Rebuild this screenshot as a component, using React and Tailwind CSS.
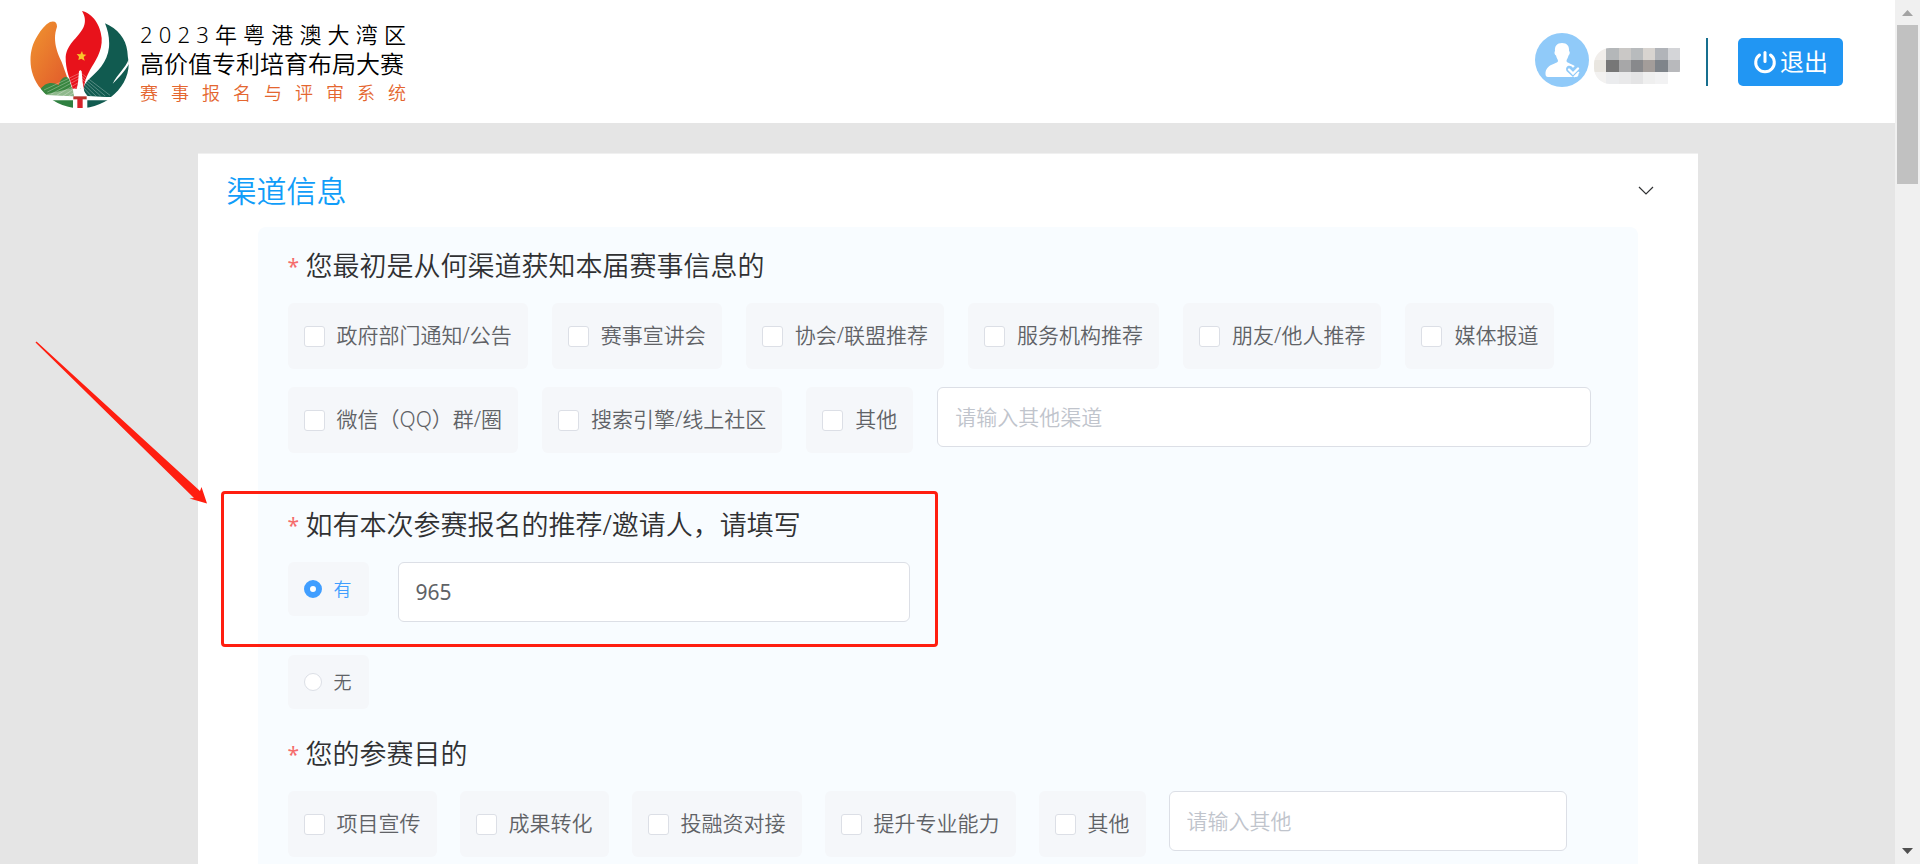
import React from "react";

const CHANNELS = [
  "政府部门通知/公告",
  "赛事宣讲会",
  "协会/联盟推荐",
  "服务机构推荐",
  "朋友/他人推荐",
  "媒体报道",
  "微信（QQ）群/圈",
  "搜索引擎/线上社区",
  "其他",
];

const PURPOSES = ["项目宣传", "成果转化", "投融资对接", "提升专业能力", "其他"];

const MASK = [
  ["#f1eeeb", "#b4b7b9", "#cac8c6", "#b8bbbd", "#d8d4d0", "#b1b4b9", "#d4d5d8"],
  ["#e9e6e0", "#777777", "#a7a7a8", "#88898c", "#a39d9a", "#7f848a", "#b8b9bc"],
  ["#f3f2f1", "#ebecee", "#e9e9ea", "#e4e4e5", "#efefef", "#f2f2f3", "#ffffff"],
];

function Emblem() {
  return (
    <svg viewBox="90 28 297 297" className="h-[99px] w-[99px] shrink-0" aria-hidden="true">
      <defs>
        <linearGradient id="flameOrange" x1="0" y1="0" x2="1" y2="1">
          <stop offset="0" stopColor="#f0952f" />
          <stop offset="1" stopColor="#e0552b" />
        </linearGradient>
        <clipPath id="emblemBase">
          <path d="M90 225 L385 225 L350 278 Q300 322 240 323 Q165 320 122 264 Z" />
        </clipPath>
      </defs>
      <path
        d="M150 64 Q171 58 171 78 C160 110 164 140 184 182 C192 200 200 232 216 262 L190 266 L124 266 C84 222 82 152 112 106 C124 86 136 72 150 64 Z"
        fill="url(#flameOrange)"
      />
      <g clipPath="url(#emblemBase)">
        <path d="M118 270 C134 244 158 242 176 254 C182 230 200 222 208 236 L222 290 L150 288 Z" fill="#39863f" />
        <path d="M132 282 L218 262 L222 288 L140 288 Z" fill="#8fb98c" />
        <path d="M150 299 H219 V326 H150 Z" fill="#2f8040" />
        <path d="M262 299 H330 L300 325 H262 Z" fill="#115b50" />
      </g>
      <path
        d="M315 68 C352 84 378 114 382 152 Q383 168 386 184 C388 226 366 264 332 290 L262 286 L248 266 Q252 252 262 240 C292 214 322 186 327 140 C329 112 324 90 315 68 Z"
        fill="#115b50"
      />
      <path d="M386 176 C378 200 352 222 338 249 C356 232 372 214 387 190 Z" fill="#fff" />
      <path
        d="M246 31 C278 38 302 74 305 112 C308 152 284 184 270 208 C258 230 252 248 252 264 L218 264 C210 236 196 206 197 168 C202 126 240 108 252 76 C258 60 254 44 246 31 Z"
        fill="#e8121b"
      />
      <polygon points="246,151 249,161 259,162 251,169 254,180 244,174 235,178 237,168 230,160 241,161" fill="#f9c52b" />
      <g stroke="#fff" strokeWidth="1.3" opacity="0.7" fill="none">
        <path d="M238 218 L132 268" />
        <path d="M238 226 L142 274" />
        <path d="M238 234 L154 280" />
        <path d="M238 244 L170 284" />
        <path d="M238 254 L186 288" />
        <path d="M238 264 L204 288" />
        <path d="M244 218 L330 284" />
        <path d="M244 226 L316 286" />
        <path d="M244 234 L302 286" />
        <path d="M244 244 L290 288" />
        <path d="M244 254 L276 288" />
        <path d="M244 264 L264 288" />
      </g>
      <path d="M241 208 L237 212 L234 246 L223 300 L232 300 L241 262 L249 300 L258 300 L248 246 L245 212 Z" fill="#fff" />
      <path d="M126 282 Q240 289 342 289 L332 298 Q230 298 142 297 L126 291 Z" fill="#fff" />
      <path d="M220 287 H260 V296 H220 Z" fill="#b8342c" />
      <path d="M232 294 H248 V322 H232 Z" fill="#d8222a" />
    </svg>
  );
}

function Logo() {
  return (
    <div className="flex items-center gap-[11px] pb-1">
      <Emblem />
      <div className="w-[266px] pt-[6px] text-black">
        <div className="flex justify-between text-[22px] leading-[30px]">
          {[..."2023年粤港澳大湾区"].map((ch, i) => (
            <span key={i}>{ch}</span>
          ))}
        </div>
        <div className="text-[24px] leading-[30px] whitespace-nowrap">高价值专利培育布局大赛</div>
        <div className="text-[18px] leading-[28px] text-[#e4662f] [text-align-last:justify]">赛事报名与评审系统</div>
      </div>
    </div>
  );
}

function Avatar() {
  return (
    <svg viewBox="0 0 54 54" className="h-[54px] w-[54px]" aria-hidden="true">
      <circle cx="27" cy="27" r="27" fill="#90caf9" />
      <path
        d="M27 10 C32 10 34.500 13 34 18 C35.500 19 34.500 22 33.500 22.500 C33 25 31.500 26.500 31.500 28 C31.500 31 43.500 30.500 43.500 41 Q43.500 44 41 44 H13 Q10.500 44 10.500 41 C10.500 30.500 23 31 23 28 C23 26.500 21.500 25 21 22.500 C19.500 22 19 19 20 18 C19.500 13 22 10 27 10 Z"
        fill="#fff"
      />
      <path d="M38 44 L31.500 38 C29.500 33 35.500 31 38 35 C40.500 31 46 33 44 38 Z" fill="#90caf9" />
      <path d="M34 36.500 L38 40.500 L43 35.500" fill="none" stroke="#fff" strokeWidth="2.400" strokeLinecap="round" />
      <path d="M39 44 L44 39" stroke="#fff" strokeWidth="1.500" />
    </svg>
  );
}

function MaskedName() {
  return (
    <div
      className="grid w-[86px] grid-cols-7 overflow-hidden rounded-l-[16px] rounded-br-[14px]"
      role="img"
      aria-label="用户名"
    >
      {MASK.flat().map((color, i) => (
        <span key={i} className="h-3" style={{ backgroundColor: color }} />
      ))}
    </div>
  );
}

function Header() {
  return (
    <header className="flex h-[123px] shrink-0 items-center justify-between bg-white pr-[52px] pl-[30px]">
      <Logo />
      <div className="flex items-center">
        <div className="flex items-end gap-[5px] pb-1">
          <Avatar />
          <div className="pb-[3px]">
            <MaskedName />
          </div>
        </div>
        <div className="ml-[26px] h-12 w-[2px] bg-[#176f8f]" />
        <button
          type="button"
          className="ml-[30px] flex h-12 w-[105px] items-center justify-center gap-[3px] rounded-[5px] bg-[#2196f3] text-[24px] text-white"
        >
          <svg viewBox="0 0 24 24" className="h-6 w-6" fill="none" stroke="#fff" strokeWidth="3" strokeLinecap="round" aria-hidden="true">
            <path d="M6.500 5 A9.300 9.300 0 1 0 17.500 5" />
            <path d="M12 2.500 V11.500" />
          </svg>
          <span className="leading-[30px] font-normal">退出</span>
        </button>
      </div>
    </header>
  );
}

function CheckOption({ label }) {
  return (
    <label className="flex h-[66px] items-center gap-3 rounded-[6px] bg-[#f5f7fa] px-4 text-[21px] whitespace-nowrap text-[#606266]">
      <input type="checkbox" className="h-[21px] w-[21px] appearance-none rounded-[3px] border border-[#dcdfe6] bg-white" />
      {label}
    </label>
  );
}

function RadioOption({ label, checked }) {
  return (
    <label className="flex h-[54px] w-[81px] items-center gap-3 rounded-[6px] bg-[#f5f7fa] pl-4 text-[18px] text-[#606266] has-checked:text-[#409eff]">
      <input
        type="radio"
        name="referrer"
        defaultChecked={checked}
        className="h-[18px] w-[18px] appearance-none rounded-full border border-[#dcdfe6] bg-white checked:border-[6px] checked:border-[#409eff]"
      />
      {label}
    </label>
  );
}

const FIELD =
  "h-[60px] rounded-[6px] border border-[#dcdfe6] bg-white px-[17px] text-[21px] text-[#606266] placeholder:text-[#c0c4cc] outline-none";

function Question({ title, children }) {
  return (
    <fieldset className="min-w-0">
      <legend className="mb-[17px] flex items-center gap-2 text-[27px] leading-10 text-[#303133]">
        <span className="w-[10px] text-[21px] leading-8 font-normal text-[#f56c6c]">*</span>
        {title}
      </legend>
      {children}
    </fieldset>
  );
}

function Highlight() {
  return (
    <>
      <div className="pointer-events-none absolute -top-[14px] -left-[67px] h-[156px] w-[717px] rounded-[4px] border-[3px] border-[#ff1e10]" />
      <svg
        viewBox="0 0 174 164"
        className="pointer-events-none absolute -top-[165px] -left-[253px] h-[164px] w-[174px]"
        aria-hidden="true"
      >
        <path d="M0.500 2.500 L1.500 1.500 L165 151 L166.500 147 L172 163.500 L154.500 158.500 L159 158 Z" fill="#ff1e10" />
      </svg>
    </>
  );
}

function ScrollRail() {
  return (
    <div className="flex w-[25px] shrink-0 flex-col items-center justify-between bg-[#f0f0f0]" aria-hidden="true">
      <div className="flex w-full flex-col items-center">
        <svg viewBox="0 0 25 25" className="h-[25px] w-[25px]">
          <path d="M7 16 L12.500 10 L18 16 Z" fill="#a3a3a3" />
        </svg>
        <div className="h-[159px] w-[21px] bg-[#c1c1c1]" />
      </div>
      <svg viewBox="0 0 25 25" className="h-[25px] w-[25px]">
        <path d="M7 9 L12.500 15 L18 9 Z" fill="#505050" />
      </svg>
    </div>
  );
}

export default function App() {
  return (
    <div className="flex h-screen overflow-hidden bg-[#e5e5e5] font-['Noto_Sans','Noto_Sans_CJK_SC',sans-serif] font-[350]">
      <div className="flex min-w-0 flex-1 flex-col overflow-hidden">
        <Header />
        <main className="mx-auto mt-[30px] w-full max-w-[1500px] shrink-0 border-t border-[#f0f0f0] bg-white pb-8">
          <div className="flex h-[73px] items-center justify-between pr-[44px] pl-[29px]">
            <h1 className="text-[30px] leading-10 text-[#109df9]">渠道信息</h1>
            <button type="button" aria-label="收起" className="flex h-4 w-4 items-center">
              <svg viewBox="0 0 16 16" className="h-4 w-4" fill="none" stroke="#303133" strokeWidth="1.200">
                <path d="M1 4 L8 11 L15 4" />
              </svg>
            </button>
          </div>
          <form className="mx-[60px] rounded-[8px] bg-[#f8fcff] px-[30px] pt-[19px] pb-[60px]">
            <Question title="您最初是从何渠道获知本届赛事信息的">
              <div className="flex flex-wrap items-start gap-x-6 gap-y-[18px] pr-[17px]">
                {CHANNELS.map((label) => (
                  <CheckOption key={label} label={label} />
                ))}
                <input type="text" aria-label="其他渠道" placeholder="请输入其他渠道" className={`${FIELD} min-w-0 flex-1`} />
              </div>
            </Question>

            <div className="relative mt-[52px]">
              <Question title="如有本次参赛报名的推荐/邀请人，请填写">
                <div className="flex items-start gap-[29px]">
                  <RadioOption label="有" checked />
                  <input type="text" aria-label="推荐/邀请人" defaultValue="965" className={`${FIELD} w-[512px] font-normal`} />
                </div>
                <div className="mt-[33px] flex">
                  <RadioOption label="无" />
                </div>
              </Question>
              <Highlight />
            </div>

            <div className="mt-[25px]">
              <Question title="您的参赛目的">
                <div className="flex flex-wrap items-start gap-x-[23px] gap-y-[18px]">
                  {PURPOSES.map((label) => (
                    <CheckOption key={label} label={label} />
                  ))}
                  <input type="text" aria-label="其他目的" placeholder="请输入其他" className={`${FIELD} w-[398px]`} />
                </div>
              </Question>
            </div>
          </form>
        </main>
      </div>
      <ScrollRail />
    </div>
  );
}
